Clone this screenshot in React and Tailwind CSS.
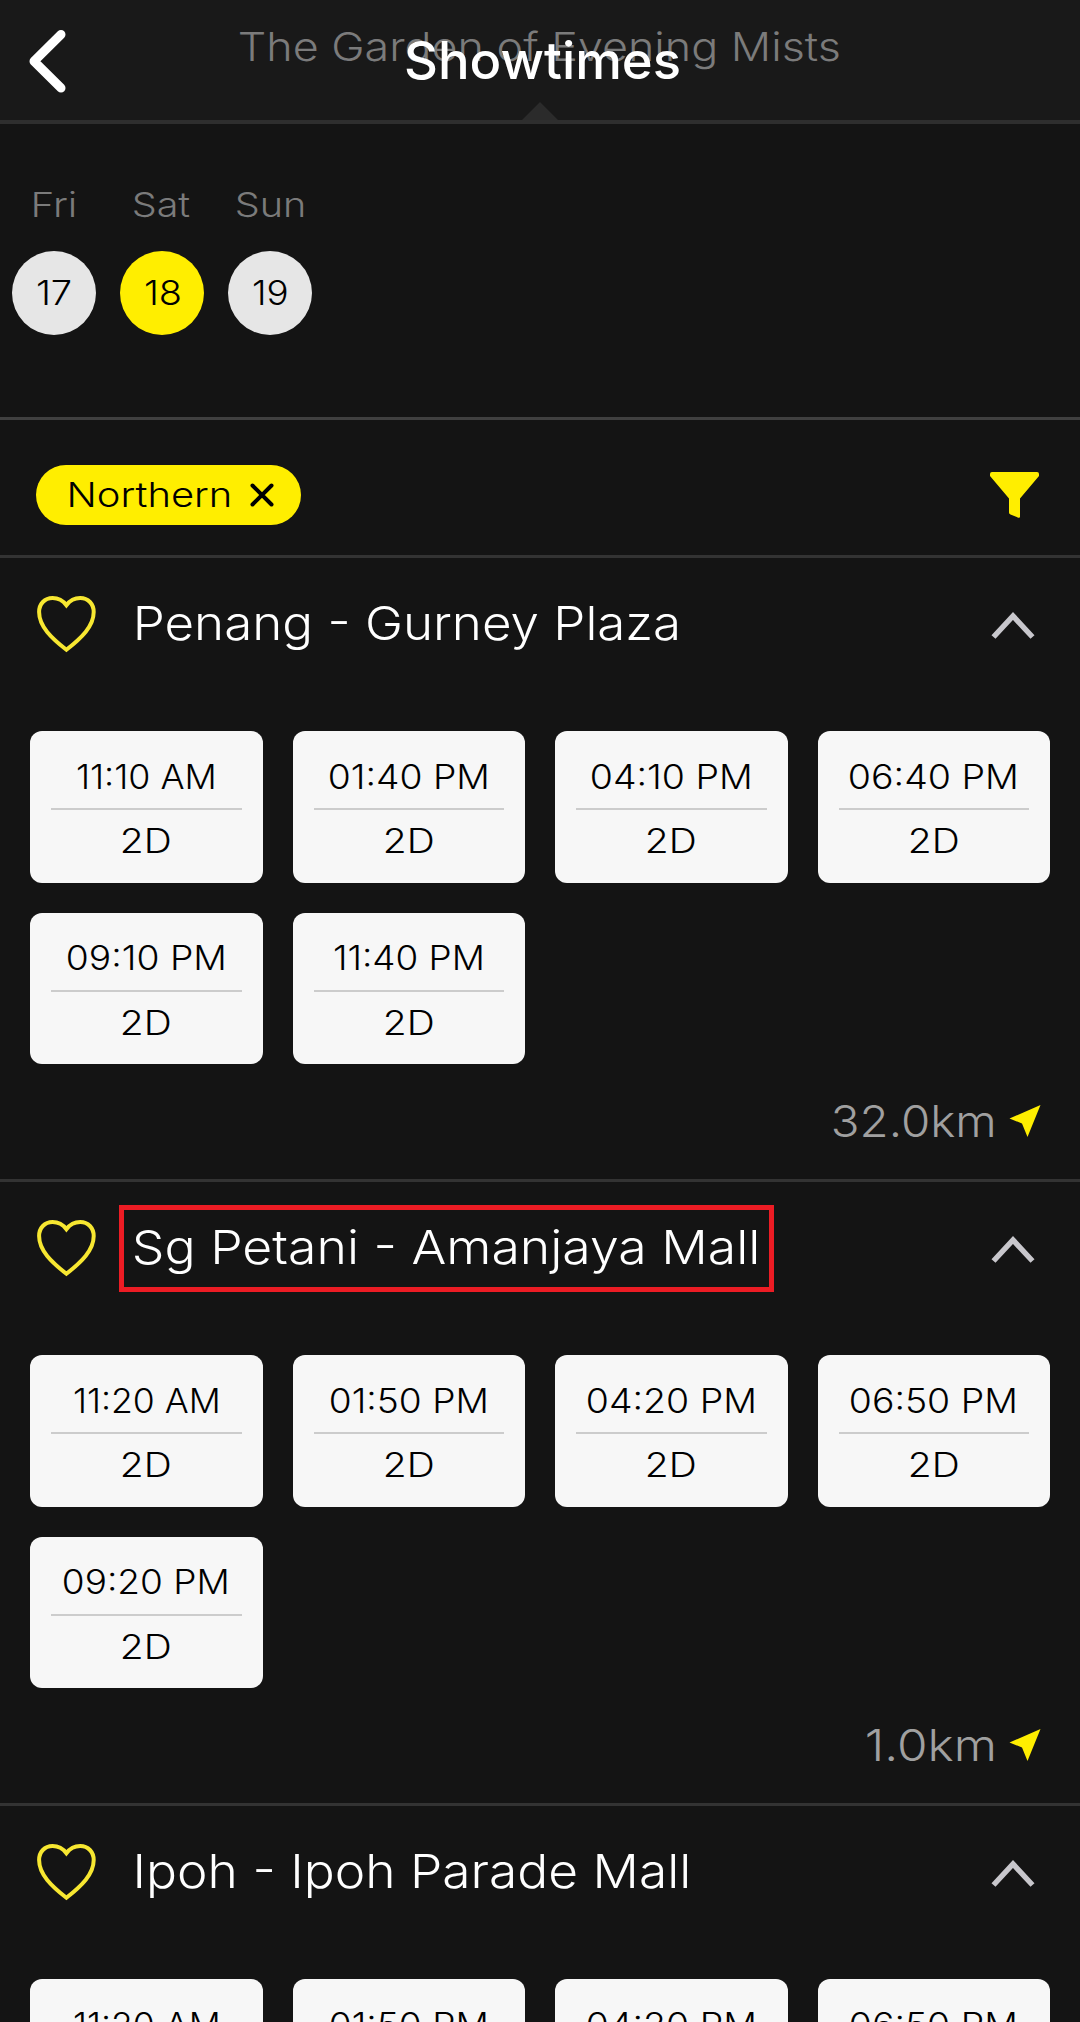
import { useLayoutEffect, useRef } from "react";

// Renders one line of text whose inked width is exactly `w` pixels.
function Fit({ w, className = "", children }) {
  const box = useRef(null);
  const inner = useRef(null);
  useLayoutEffect(() => {
    const el = inner.current;
    const cs = getComputedStyle(el);
    const ctx = document.createElement("canvas").getContext("2d");
    ctx.font = `${cs.fontWeight} ${cs.fontSize} ${cs.fontFamily}`;
    const m = ctx.measureText(children);
    const ink = m.actualBoundingBoxLeft + m.actualBoundingBoxRight;
    const k = w / ink;
    el.style.transform = `translateX(${m.actualBoundingBoxLeft * k}px) scaleX(${k})`;
    box.current.style.width = `${w}px`;
  }, [w, children]);
  return (
    <span ref={box} className="inline-block shrink-0 text-left">
      <span ref={inner} className={"inline-block origin-left whitespace-nowrap " + className}>
        {children}
      </span>
    </span>
  );
}

const days = [
  { name: "Fri", nw: 41, date: "17", dw: 34, on: false },
  { name: "Sat", nw: 56, date: "18", dw: 35, on: true },
  { name: "Sun", nw: 67, date: "19", dw: 34, on: false },
];

const cinemas = [
  {
    name: "Penang - Gurney Plaza",
    w: 540,
    inset: "pl-[137px]",
    km: "32.0km",
    kw: 160,
    times: [["11:10 AM", 137], ["01:40 PM", 157], ["04:10 PM", 158], ["06:40 PM", 166], ["09:10 PM", 156], ["11:40 PM", 148]],
  },
  {
    name: "Sg Petani - Amanjaya Mall",
    w: 623,
    inset: "pl-[134px]",
    marked: true,
    km: "1.0km",
    kw: 126,
    times: [["11:20 AM", 144], ["01:50 PM", 155], ["04:20 PM", 166], ["06:50 PM", 164], ["09:20 PM", 163]],
  },
  {
    name: "Ipoh - Ipoh Parade Mall",
    w: 551,
    inset: "pl-[137px]",
    km: "",
    kw: 0,
    times: [["11:20 AM", 144], ["01:50 PM", 155], ["04:20 PM", 166], ["06:50 PM", 164]],
  },
];

function Heart() {
  return (
    <svg className="absolute left-[36px] top-[37px]" width="62" height="60" viewBox="0 0 62 60" fill="none" stroke="#f7e731" strokeWidth="4">
      <path d="M30.4 10.2C26.5 5 21.5 3 16.6 3C8.6 3 3.1 9 3.1 17C3.1 31.5 15.6 43 30.4 54.8C45.2 43 57.7 31.5 57.7 17C57.7 9 52.2 3 44.2 3C39.3 3 34.3 5 30.4 10.2Z" />
    </svg>
  );
}

function Chevron() {
  return (
    <svg className="mr-[44px]" width="46" height="30" viewBox="0 0 46 30" fill="none" stroke="#c8c7cc" strokeWidth="5.5">
      <path d="M3.5 26L23 5L42.5 26" />
    </svg>
  );
}

function Slot({ time, w }) {
  return (
    <div className="flex h-[151.5px] flex-col rounded-[12px] bg-[#f7f7f7] px-[21px] text-[34px] font-light text-black">
      <div className="flex h-[79px] items-center justify-center border-b-2 border-[#cccccc] pr-[1px] pt-[14px] leading-[40px]">
        <Fit w={w}>{time}</Fit>
      </div>
      <div className="flex h-[62px] items-center justify-center leading-[40px]">
        <Fit w={48}>2D</Fit>
      </div>
    </div>
  );
}

function Cinema({ c }) {
  return (
    <section className="h-[624px] border-b-[3px] border-[#333333]">
      <div className="relative flex h-[130px] items-center justify-between">
        <Heart />
        <h2 className={"text-[47px] font-[350] leading-[56px] text-white " + c.inset}>
          <Fit w={c.w}>{c.name}</Fit>
        </h2>
        <div className="pt-[5px]">
          <Chevron />
        </div>
        {c.marked && <div className="absolute left-[119px] top-[23px] h-[87px] w-[655px] border-[5px] border-[#ec1c24]" />}
      </div>
      <div className="grid h-[376px] grid-cols-4 content-start gap-[30px] px-[30px] pt-[43px]">
        {c.times.map(([t, w]) => (
          <Slot key={t} time={t} w={w} />
        ))}
      </div>
      {c.km && (
        <div className="flex h-[113px] items-center justify-end pr-[39px] text-[44px] font-[350] leading-[50px] text-[#a0a0a0]">
          <Fit w={c.kw}>{c.km}</Fit>
          <svg className="ml-[16px]" width="32" height="32" viewBox="0 0 32 32" fill="#ffee00">
            <path d="M31.5 0L0.5 13.5L13 18.5L18.5 32Z" />
          </svg>
        </div>
      )}
    </section>
  );
}

export default function App() {
  return (
    <div className="h-[2022px] w-[1080px] overflow-hidden bg-[#141414] font-['Inter',sans-serif]">
      <header className="relative flex h-[124px] items-center justify-center border-b-4 border-[#2e2e2e] bg-[#191919]">
        <div className="absolute left-[240px] top-[22px] text-[40px] font-[350] leading-[50px] text-[#7b7b7b]">
          <Fit w={599}>The Garden of Evening Mists</Fit>
        </div>
        <svg className="absolute left-[28px] top-[28px]" width="40" height="68" viewBox="0 0 40 68" fill="none" stroke="#ffffff" strokeWidth="9" strokeLinecap="round" strokeLinejoin="round">
          <path d="M33 6.5L6 33.3L33 60" />
        </svg>
        <svg className="absolute bottom-0 left-[522px]" width="36" height="18" viewBox="0 0 36 18" fill="#2b2b2b">
          <path d="M18 0L36 18H0Z" />
        </svg>
        <h1 className="relative pl-[5px] pt-[2px] text-[52px] font-medium leading-[60px] text-white">
          <Fit w={273}>Showtimes</Fit>
        </h1>
      </header>

      <div className="flex h-[296px] border-b-[3px] border-[#404040] pt-[61px]">
        {days.map((d) => (
          <div key={d.name} className="flex w-[108px] flex-col items-center gap-[26px] text-[34px] leading-[40px]">
            <div className="font-[350] text-[#7b7b7b]">
              <Fit w={d.nw}>{d.name}</Fit>
            </div>
            <div className={"flex h-[84px] w-[84px] items-center justify-center rounded-full font-[350] text-black " + (d.on ? "bg-[#ffee00]" : "bg-[#e6e6e6]")}>
              <Fit w={d.dw}>{d.date}</Fit>
            </div>
          </div>
        ))}
      </div>

      <div className="flex h-[138px] items-center justify-between border-b-[3px] border-[#333333] pl-[36px] pr-[41px] pt-[15px]">
        <div className="flex h-[60px] w-[265px] items-center justify-between rounded-full bg-[#ffee00] pl-[34px] pr-[27px] text-[34px] font-[350] leading-[40px] text-black">
          <Fit w={160}>Northern</Fit>
          <svg width="24" height="24" viewBox="0 0 24 24" fill="none" stroke="#000000" strokeWidth="4" strokeLinecap="round">
            <path d="M2.5 2.5L21.5 21.5M21.5 2.5L2.5 21.5" />
          </svg>
        </div>
        <svg width="49" height="46" viewBox="0 0 49 46" fill="#ffee00">
          <path d="M2 0H47Q49 0 49 2V4L30 26.5V44.5Q30 46.3 28.3 45.7L20.5 42.6Q19 42 19 40.5V26.5L0 4V2Q0 0 2 0Z" />
        </svg>
      </div>

      {cinemas.map((c) => (
        <Cinema key={c.name} c={c} />
      ))}
    </div>
  );
}
